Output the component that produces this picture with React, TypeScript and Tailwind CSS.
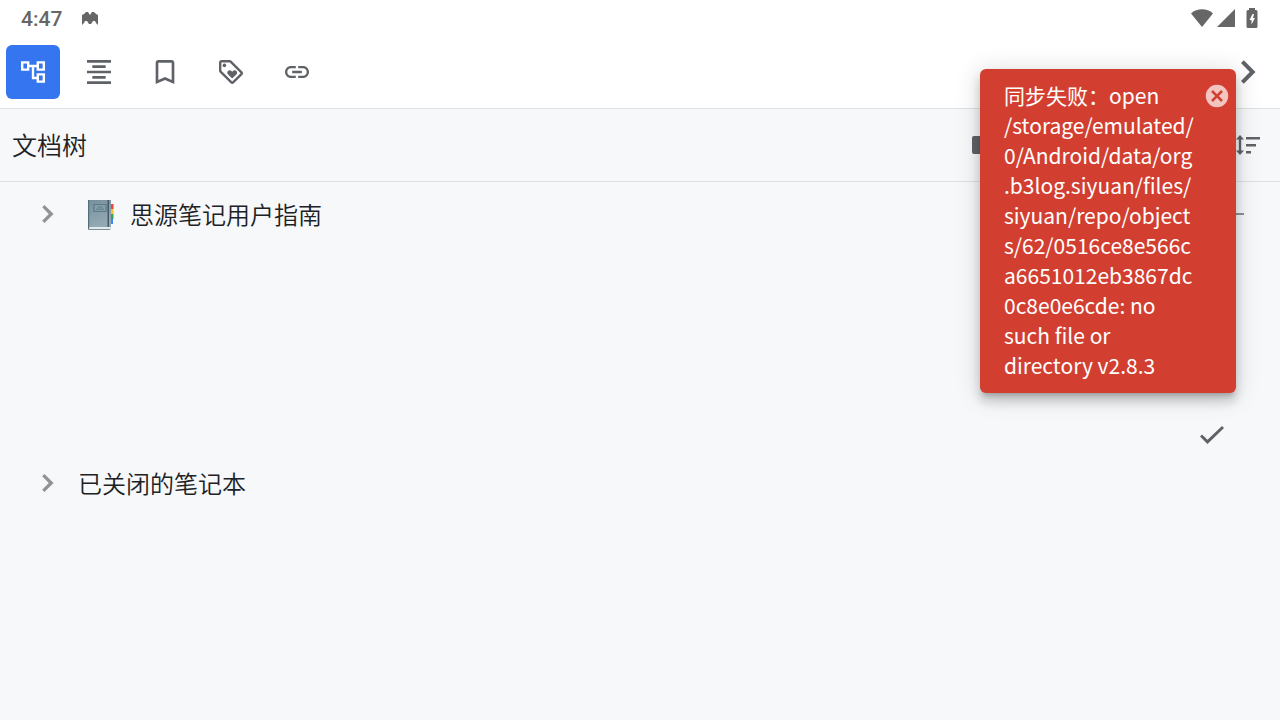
import { useState } from "react";
import type { ReactNode } from "react";
import clsx from "clsx";

const Icon = ({ viewBox = "0 0 24 24", className = "size-6", children }: { viewBox?: string; className?: string; children: ReactNode }) => (
  <svg viewBox={viewBox} className={clsx("shrink-0", className)} fill="currentColor" aria-hidden="true">
    {children}
  </svg>
);

const tabs = [
  {
    label: "文档树",
    viewBox: "2 2 20 20",
    icon: <path d="M22 11V3h-7v3H9V3H2v8h7V8h2v10h4v3h7v-8h-7v3h-2V8h2v3h7zM7 9H4V5h3v4zm10 6h3v4h-3v-4zm0-10h3v4h-3V5z" />,
  },
  {
    label: "大纲",
    viewBox: "3 3 18 18",
    icon: <path d="M7 15v2h10v-2H7zm-4 6h18v-2H3v2zm0-8h18v-2H3v2zm4-6v2h10V7H7zM3 3v2h18V3H3z" />,
  },
  {
    label: "书签",
    viewBox: "3 3 18 18",
    icon: <path d="M17 3H7c-1.1 0-2 .9-2 2v16l7-3 7 3V5c0-1.1-.9-2-2-2zm0 15l-5-2.18L7 18V5h10v13z" />,
  },
  {
    label: "标签",
    viewBox: "2 2 20 20",
    icon: (
      <>
        <path d="M21.41 11.58l-9-9C12.05 2.22 11.55 2 11 2H4c-1.1 0-2 .9-2 2v7c0 .55.22 1.05.59 1.42l9 9c.36.36.86.58 1.41.58s1.05-.22 1.41-.59l7-7c.37-.36.59-.86.59-1.41s-.23-1.06-.59-1.42zM13 20.01L4 11V4h7v-.01l9 9-7 7.02z" />
        <circle cx="6.5" cy="6.5" r="1.5" />
        <path d="M8.9 12.55c0 .57.23 1.07.6 1.45l3.5 3.5 3.5-3.5c.37-.37.6-.89.6-1.45 0-1.13-.92-2.05-2.05-2.05-.57 0-1.08.23-1.45.6l-.6.6-.6-.59c-.37-.38-.89-.61-1.45-.61-1.13 0-2.05.92-2.05 2.05z" />
      </>
    ),
  },
  {
    label: "反向链接",
    viewBox: "2 2 20 20",
    icon: <path d="M3.9 12c0-1.71 1.39-3.1 3.1-3.1h4V7H7c-2.76 0-5 2.24-5 5s2.24 5 5 5h4v-1.9H7c-1.71 0-3.1-1.39-3.1-3.1zM8 13h8v-2H8v2zm9-6h-4v1.9h4c1.71 0 3.1 1.39 3.1 3.1s-1.39 3.1-3.1 3.1h-4V17h4c2.76 0 5-2.24 5-5s-2.24-5-5-5z" />,
  },
];

const StatusBar = () => (
  <div className="flex h-9 items-center bg-white pr-[22px] pb-px pl-[21px] text-[#666666]">
    <time className="pt-1 font-[Roboto,sans-serif] text-[21px] font-medium">4:47</time>
    <Icon className="ml-5 h-4 w-4" viewBox="0 0 16 16">
      <path d="M0 15V5l2-1 2-2h2l2 3 2-3h2l2 2 2 1v10l-2-2-1-2h-2l-2 3H7l-2-3H3l-1 2z" />
    </Icon>
    <div className="ml-auto flex items-center">
      <Icon className="h-5 w-6" viewBox="0 0 24 20">
        <path d="M1 5.500C7-.1 17-.1 23 5.500L12 19z" />
      </Icon>
      <Icon className="ml-[2px] h-5 w-5" viewBox="0 0 20 20">
        <path d="M1 19 19 1v18z" />
      </Icon>
      <Icon className="ml-2.5 h-5 w-3" viewBox="0 0 12 20">
        <path fillRule="evenodd" d="M3 2V0h6v2h1q1.500 0 1.500 1.500v15q0 1.500-1.500 1.500h-8Q.5 20 .5 18.500v-15Q.5 2 2 2zm3.500 4-3 6h2v4.500l3.500-6.500H7l1-4z" />
      </Icon>
    </div>
  </div>
);

const Chevron = () => (
  <Icon className="size-6" viewBox="0 0 24 24">
    <path d="m6 3 2.800-2.800L20.500 12 8.800 23.800 6 21l8.800-9z" />
  </Icon>
);

const Notebook = () => (
  <svg viewBox="0 0 30 32" className="h-8 w-[30px] shrink-0" aria-hidden="true">
    <defs>
      <linearGradient id="cover" x1="0" y1="0" x2="0.3" y2="1">
        <stop offset="0" stopColor="#78909c" />
        <stop offset="1" stopColor="#93aab5" />
      </linearGradient>
    </defs>
    <path d="M24 6h4.500v5H24z" fill="#f44336" />
    <path d="M24 11h4.500v5H24z" fill="#fbc02d" />
    <path d="M24 16h4.500v5H24z" fill="#34a853" />
    <path d="M24 21h4v5h-4z" fill="#4285f4" />
    <path d="M3 2h22.500v28q0 2-1 2H4q-1 0-1-1z" fill="#78909c" />
    <path d="M4 2h22v27H4z" fill="url(#cover)" />
    <path d="M4 29h21.500v2H4z" fill="#e6eaec" />
    <path d="M3 2h1.200v29H3z" fill="#546e7a" />
    <path d="M22.500 2H24v27h-1.500z" fill="#455a64" />
    <path d="M9 6.500h12v7H9z" fill="#86a0ab" stroke="#5b7986" strokeWidth="1.200" />
    <path d="M12.500 9h5M11 11.200h8" stroke="#5b7986" />
  </svg>
);

const TreeToggle = ({ label }: { label: string }) => (
  <button type="button" aria-label={label} className="flex items-center text-[#909296]">
    <Icon className="size-[18px]" viewBox="0 0 18 18">
      <path d="M3.200 2.200 5.400 0l9.200 9-9.200 9-2.200-2.200L9.800 9z" />
    </Icon>
  </button>
);

const Toast = ({ onClose }: { onClose: () => void }) => (
  <div
    role="alert"
    className="absolute top-[69px] right-11 w-64 rounded-md bg-[#d23f31] pt-[11px] pr-10 pb-[13px] pl-6 text-[21px] leading-[30px] break-words text-white shadow-[0_5px_5px_-3px_rgba(0,0,0,0.2),0_8px_10px_1px_rgba(0,0,0,0.14),0_3px_24px_2px_rgba(0,0,0,0.14)]"
  >
    同步失败：open /storage/emulated/0/Android/data/org.b3log.siyuan/files/siyuan/repo/objects/62/0516ce8e566ca6651012eb3867dc0c8e0e6cde: no such file or directory v2.8.3
    <button type="button" aria-label="关闭" onClick={onClose} className="absolute top-[15px] right-[7px] text-white/70">
      <Icon>
        <path fillRule="evenodd" d="M12 .8a11.200 11.200 0 1 0 0 22.400A11.200 11.200 0 0 0 12 .8zM7.900 6.100 12 10.200l4.100-4.100 1.800 1.800-4.100 4.100 4.100 4.100-1.800 1.800-4.100-4.100-4.100 4.100-1.800-1.800 4.100-4.100-4.100-4.100z" />
      </Icon>
    </button>
  </div>
);

export default function App() {
  const [active, setActive] = useState(0);
  const [showToast, setShowToast] = useState(true);

  return (
    <div className="relative min-h-screen bg-[#f6f8fa] font-['Noto_Sans_CJK_SC',sans-serif] text-[#202124]">
      <StatusBar />

      <nav className="flex h-[73px] items-center gap-3 border-b border-[#dfe0e1] bg-white px-1.5 text-[#5f6368]">
        {tabs.map((tab, i) => (
          <button
            key={tab.label}
            type="button"
            aria-label={tab.label}
            onClick={() => setActive(i)}
            className={clsx("flex size-[54px] items-center justify-center rounded-md", active === i && "bg-[#3575f0] text-white")}
          >
            <Icon viewBox={tab.viewBox}>{tab.icon}</Icon>
          </button>
        ))}
        <button type="button" aria-label="收起" className="ml-auto flex size-[54px] items-center justify-center">
          <Chevron />
        </button>
      </nav>

      <header className="flex h-[73px] items-center border-b border-[#dfe0e1] pr-5 pl-3">
        <h1 className="text-[25px] font-[350]">文档树</h1>
        <div className="ml-auto flex items-center text-[#5f6368]">
          <button type="button" aria-label="打开笔记本" className="mr-[240px]">
            <Icon>
              <path d="M2 3h7l3 3h10q2 0 2 2v11q0 2-2 2H2q-2 0-2-2V5q0-2 2-2z" />
            </Icon>
          </button>
          <button type="button" aria-label="排序">
            <Icon>
              <path d="M4 2 8 6.500H5.200v11H8L4 22l-4-4.500h2.800v-11H0zM10 4h14v2.400H10zm0 7h10v2.400H10zm0 7h5v2.400h-5z" />
            </Icon>
          </button>
        </div>
      </header>

      <main className="text-2xl font-[350]">
        <div className="flex h-16 items-center pr-9 pl-[39px]">
          <TreeToggle label="展开思源笔记用户指南" />
          <div className="ml-7 flex items-center gap-[15px]">
            <Notebook />
            <span>思源笔记用户指南</span>
          </div>
          <button type="button" aria-label="关闭笔记本" className="ml-auto text-[#909296]">
            <Icon className="size-[18px]" viewBox="0 0 18 18">
              <path d="M0 8h18v2H0z" />
            </Icon>
          </button>
        </div>

        <div className="mt-[177px] flex justify-end pr-14 text-[#5f6368]">
          <button type="button" aria-label="确定">
            <Icon>
              <path d="m0 13.500 2-2 5.500 5.200L22 3l2 2L7.500 21z" />
            </Icon>
          </button>
        </div>

        <div className="mt-1 flex h-16 items-center pl-[39px]">
          <TreeToggle label="展开已关闭的笔记本" />
          <span className="ml-[21px]">已关闭的笔记本</span>
        </div>
      </main>

      {showToast && <Toast onClose={() => setShowToast(false)} />}
    </div>
  );
}
